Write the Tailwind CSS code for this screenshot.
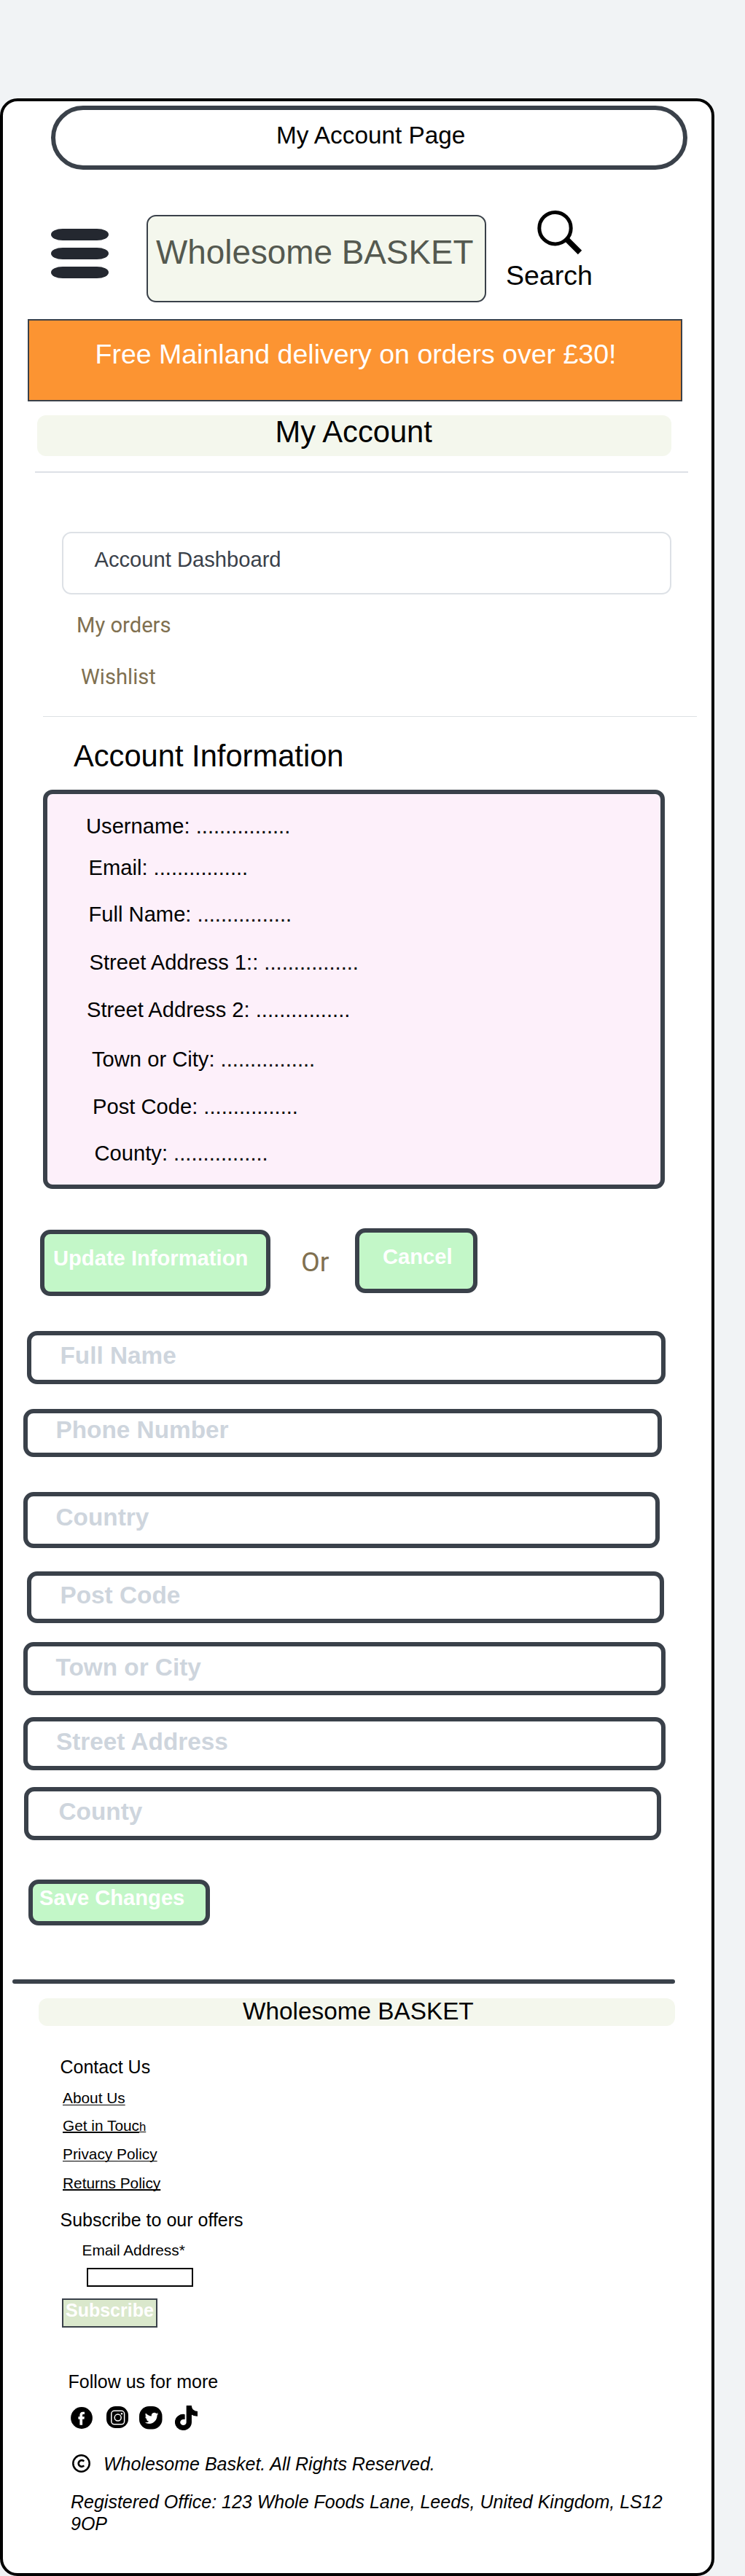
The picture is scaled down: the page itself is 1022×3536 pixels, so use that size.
<!DOCTYPE html>
<html lang="en">
<head>
<meta charset="utf-8">
<title>My Account - Wholesome Basket</title>
<script src="https://cdn.jsdelivr.net/npm/@tailwindcss/browser@4"></script>
</head>
<body class="bg-[#f1f3f5] pt-[135px] font-['Liberation_Sans',Arial,sans-serif] text-black">
<div class="flex h-[3401px] w-[980px] flex-col items-start rounded-[24px] border-4 border-black bg-white whitespace-nowrap">

  <div class="mt-[6px] ml-[66px] h-[88px] w-[873px] rounded-full border-6 border-[#3a414a] pt-[16px] pl-[303px] text-[33.33px] leading-[37px]">My Account Page</div>

  <!-- Header -->
  <header class="mt-[56px] flex items-start">
    <button class="mt-[25px] ml-[66px] flex w-[79px] flex-col gap-[10.5px]" aria-label="Menu">
      <span class="h-[15.5px] w-full rounded-[16px/8px] bg-[#242830]"></span>
      <span class="h-[15.5px] w-full rounded-[16px/8px] bg-[#242830]"></span>
      <span class="h-[15.5px] w-full rounded-[16px/8px] bg-[#242830]"></span>
    </button>
    <div class="mt-[6px] ml-[52px] h-[120px] w-[466px] rounded-[13px] border-2 border-[#3a414a] bg-[#f4f7ed] pt-[24px] pl-[11px] text-[45.83px] leading-[52px] text-[#545950]">Wholesome BASKET</div>
    <div class="ml-[27px]">
      <svg class="ml-[42px] h-[62px] w-[64px]" viewBox="0 0 64 62" fill="none" stroke="#000">
        <circle cx="25.5" cy="24.2" r="21.7" stroke-width="5"/>
        <path d="M41 39L59.5 57.5" stroke-width="7.5"/>
      </svg>
      <div class="mt-[6px] text-[37.5px] leading-[42px]">Search</div>
    </div>
  </header>

  <div class="mt-[23px] ml-[34px] h-[113px] w-[898px] border-2 border-[#3a414a] bg-[#fc9432] pt-[25px] pl-[90.5px] text-[37.5px] leading-[42px] text-white">Free Mainland delivery on orders over £30!</div>
  <h1 class="mt-[19px] ml-[47px] h-[56px] w-[870px] rounded-[12px] bg-[#f4f7ed] pl-[326.5px] text-[41.67px] leading-[45px]">My Account</h1>
  <hr class="mt-[21px] ml-[44px] h-[2px] w-[896px] border-0 bg-[#dde1e6]">

  <!-- Account navigation -->
  <nav class="flex flex-col items-start text-[29.17px]">
    <a class="mt-[81px] ml-[81px] h-[86px] w-[836px] rounded-[13px] border-2 border-[#dde1e6] pt-[20px] pl-[42.5px] leading-[32px] text-[#3a414a]">Account Dashboard</a>
    <a class="mt-[25px] ml-[101px] font-[Roboto,sans-serif] leading-[34px] text-[#807050]">My orders</a>
    <a class="mt-[37px] ml-[107px] font-[Roboto,sans-serif] leading-[34px] text-[#807050]">Wishlist</a>
  </nav>
  <hr class="mt-[37px] ml-[55px] h-px w-[897px] border-0 bg-[#dde1e4]">

  <h2 class="mt-[30px] ml-[97px] text-[41.67px] leading-[47px]">Account Information</h2>
  <section class="mt-[23px] ml-[55px] flex h-[548px] w-[853px] flex-col items-start rounded-[13px] border-6 border-[#3a414a] bg-[#fdf0fa] text-[29.17px] leading-[32px]">
    <p class="mt-[28px] ml-[53px]">Username: ................</p>
    <p class="mt-[25px] ml-[56.5px]">Email: ................</p>
    <p class="mt-[32px] ml-[56.5px]">Full Name: ................</p>
    <p class="mt-[34px] ml-[57.5px]">Street Address 1:: ................</p>
    <p class="mt-[33px] ml-[54px]">Street Address 2: ................</p>
    <p class="mt-[36px] ml-[61px]">Town or City: ................</p>
    <p class="mt-[33px] ml-[62px]">Post Code: ................</p>
    <p class="mt-[32px] ml-[64.5px]">County: ................</p>
  </section>

  <div class="mt-[54px] flex items-start text-[29.17px] leading-[32px]">
    <div class="mt-[2px] ml-[51px] h-[91px] w-[316px] rounded-[14px] border-6 border-[#3a414a] bg-[#c3f7c8] pt-[17px] pl-[12px] font-bold text-white">Update Information</div>
    <div class="mt-[24px] ml-[42px] w-[74px] font-[Roboto,sans-serif] text-[37.5px] leading-[44px] text-[#807050]">Or</div>
    <div class="h-[89px] w-[168px] rounded-[14px] border-6 border-[#3a414a] bg-[#c3f7c8] pt-[17px] pl-[32px] font-bold text-white">Cancel</div>
  </div>

  <!-- Edit form -->
  <form class="flex flex-col items-start text-[33.33px] leading-[37px] font-bold text-[#ced5dd]">
    <div class="mt-[48px] ml-[33px] h-[73px] w-[876px] rounded-[14px] border-6 border-[#3a414a] pt-[9px] pl-[39.5px]">Full Name</div>
    <div class="mt-[34px] ml-[27.5px] h-[66px] w-[876px] rounded-[14px] border-6 border-[#3a414a] pt-[4px] pl-[39px]">Phone Number</div>
    <div class="mt-[48px] ml-[27.5px] h-[77px] w-[873px] rounded-[14px] border-6 border-[#3a414a] pt-[10px] pl-[39px]">Country</div>
    <div class="mt-[32px] ml-[33px] h-[71px] w-[873.5px] rounded-[14px] border-6 border-[#3a414a] pt-[8px] pl-[39.5px]">Post Code</div>
    <div class="mt-[26px] ml-[27.5px] h-[73px] w-[881px] rounded-[14px] border-6 border-[#3a414a] pt-[10px] pl-[39px]">Town or City</div>
    <div class="mt-[30px] ml-[27.5px] h-[73px] w-[881px] rounded-[14px] border-6 border-[#3a414a] pt-[9px] pl-[39.5px]">Street Address</div>
    <div class="mt-[23px] ml-[29px] h-[73px] w-[874px] rounded-[14px] border-6 border-[#3a414a] pt-[9px] pl-[41.5px]">County</div>
    <div class="mt-[54px] ml-[34.5px] h-[63px] w-[249.5px] rounded-[14px] border-6 border-[#3a414a] bg-[#c3f7c8] pt-[3px] pl-[9.5px] text-[29.17px] leading-[32px] text-white">Save Changes</div>
  </form>

  <hr class="mt-[74px] ml-[13px] h-[6px] w-[909px] rounded-full border-0 bg-[#3a414a]">

  <!-- Footer -->
  <footer class="flex flex-col items-start">
    <div class="mt-[20px] ml-[49px] h-[38px] w-[873px] rounded-[12px] bg-[#f4f7ed] pl-[280px] text-[33.33px] leading-[35px]">Wholesome BASKET</div>
    <p class="mt-[42px] ml-[78.5px] text-[25px] leading-[28px]">Contact Us</p>
    <ul class="ml-[82px] flex flex-col items-start text-[20.83px] leading-[23px]">
      <li class="mt-[17px] h-[23px] underline decoration-1 underline-offset-2">About Us</li>
      <li class="mt-[15px] h-[23px]"><span class="underline decoration-2 underline-offset-1">Get in Touc</span><span class="text-[16.67px] leading-none underline decoration-1 underline-offset-1">h</span></li>
      <li class="mt-[16px] h-[23px] underline decoration-1 underline-offset-2 [text-decoration-skip-ink:none]">Privacy Policy</li>
      <li class="mt-[17px] h-[23px] underline decoration-2 underline-offset-1 [text-decoration-skip-ink:none]">Returns Policy</li>
    </ul>
    <p class="mt-[25px] ml-[78.5px] text-[25px] leading-[28px]">Subscribe to our offers</p>
    <p class="mt-[16px] ml-[108.5px] text-[20.83px] leading-[23px]">Email Address*</p>
    <div class="mt-[13px] ml-[115px] h-[26px] w-[146px] border-2 border-black"></div>
    <div class="mt-[16px] ml-[81px] h-[40px] w-[131px] border-2 border-[#3a414a] bg-[#dae8cc] pl-[3px] text-[25px] leading-[28px] font-bold text-white">Subscribe</div>
    <p class="mt-[60px] ml-[89.5px] text-[25px] leading-[28px]">Follow us for more</p>
    <div class="mt-[19px] ml-[93px] flex h-[34px] items-start">
      <svg class="mt-[2px] h-[30px] w-[30px]" viewBox="0 0 30 30"><circle cx="15" cy="15" r="14.9"/><path fill="#fff" d="M12.4 24.7V16.8H10.4V13.3h2V11.2C12.4 8.4 14 6.8 16.500 6.800h2.500v3.300h-1.600c-1 0-1.300.5-1.300 1.300v1.900h2.800l-.4 3.500h-2.400v7.900z"/></svg>
      <svg class="mt-px ml-[19px] h-[30px] w-[30px]" viewBox="0 0 30 30"><rect width="30" height="30" rx="12.500"/><g fill="none" stroke="#fff" stroke-width="1.500"><rect x="6.800" y="6.300" width="17.800" height="18.500" rx="4"/><circle cx="15.700" cy="15.600" r="4.500"/></g><circle cx="21" cy="10.300" r="1.200" fill="#fff"/></svg>
      <svg class="mt-px ml-[15px] h-[32px] w-[32px]" viewBox="0 0 32 32"><rect width="31.500" height="31.500" rx="13.500"/><path fill="#fff" transform="translate(7.700 7) scale(.78)" d="M23.953 4.570a10 10 0 01-2.825.775 4.958 4.958 0 002.163-2.723c-.951.555-2.005.959-3.127 1.184a4.920 4.920 0 00-8.384 4.482C7.690 8.095 4.067 6.130 1.640 3.162a4.822 4.822 0 00-.666 2.475c0 1.710.870 3.213 2.188 4.096a4.904 4.904 0 01-2.228-.616v.060a4.923 4.923 0 003.946 4.827 4.996 4.996 0 01-2.212.085 4.936 4.936 0 004.604 3.417 9.867 9.867 0 01-6.102 2.105c-.390 0-.779-.023-1.170-.067a13.995 13.995 0 007.557 2.209c9.053 0 13.998-7.496 13.998-13.985 0-.210 0-.420-.015-.630A9.935 9.935 0 0024 4.590z"/></svg>
      <svg class="ml-[17px] h-[34px] w-[31px]" viewBox="-10 -10 468 532" preserveAspectRatio="none"><path stroke="#000" stroke-width="22" stroke-linejoin="round" d="M448,209.910a210.060,210.060,0,0,1-122.770-39.250V349.380A162.550,162.550,0,1,1,185,188.310V278.200a74.620,74.620,0,1,0,52.230,71.180V0l88,0a121.180,121.180,0,0,0,1.860,22.170h0A122.180,122.180,0,0,0,381,102.390a121.430,121.430,0,0,0,67,20.140Z"/></svg>
    </div>
    <div class="mt-[32px] ml-[95px] flex items-start">
      <svg class="mt-px h-[25px] w-[25px]" viewBox="0 0 25 25" fill="none" stroke="#000"><circle cx="12.500" cy="12.500" r="11.200" stroke-width="2.500"/><path d="M16.200 9.600A4.300 4.300 0 1 0 16.200 15.400" stroke-width="2.700"/></svg>
      <p class="ml-[18px] text-[25px] leading-[28px] italic">Wholesome Basket. All Rights Reserved.</p>
    </div>
    <p class="mt-[23px] ml-[93px] w-[825px] text-[25px] leading-[30px] whitespace-normal italic">Registered Office: 123 Whole Foods Lane, Leeds, United Kingdom, LS12 9OP</p>
  </footer>
</div>
</body>
</html>
